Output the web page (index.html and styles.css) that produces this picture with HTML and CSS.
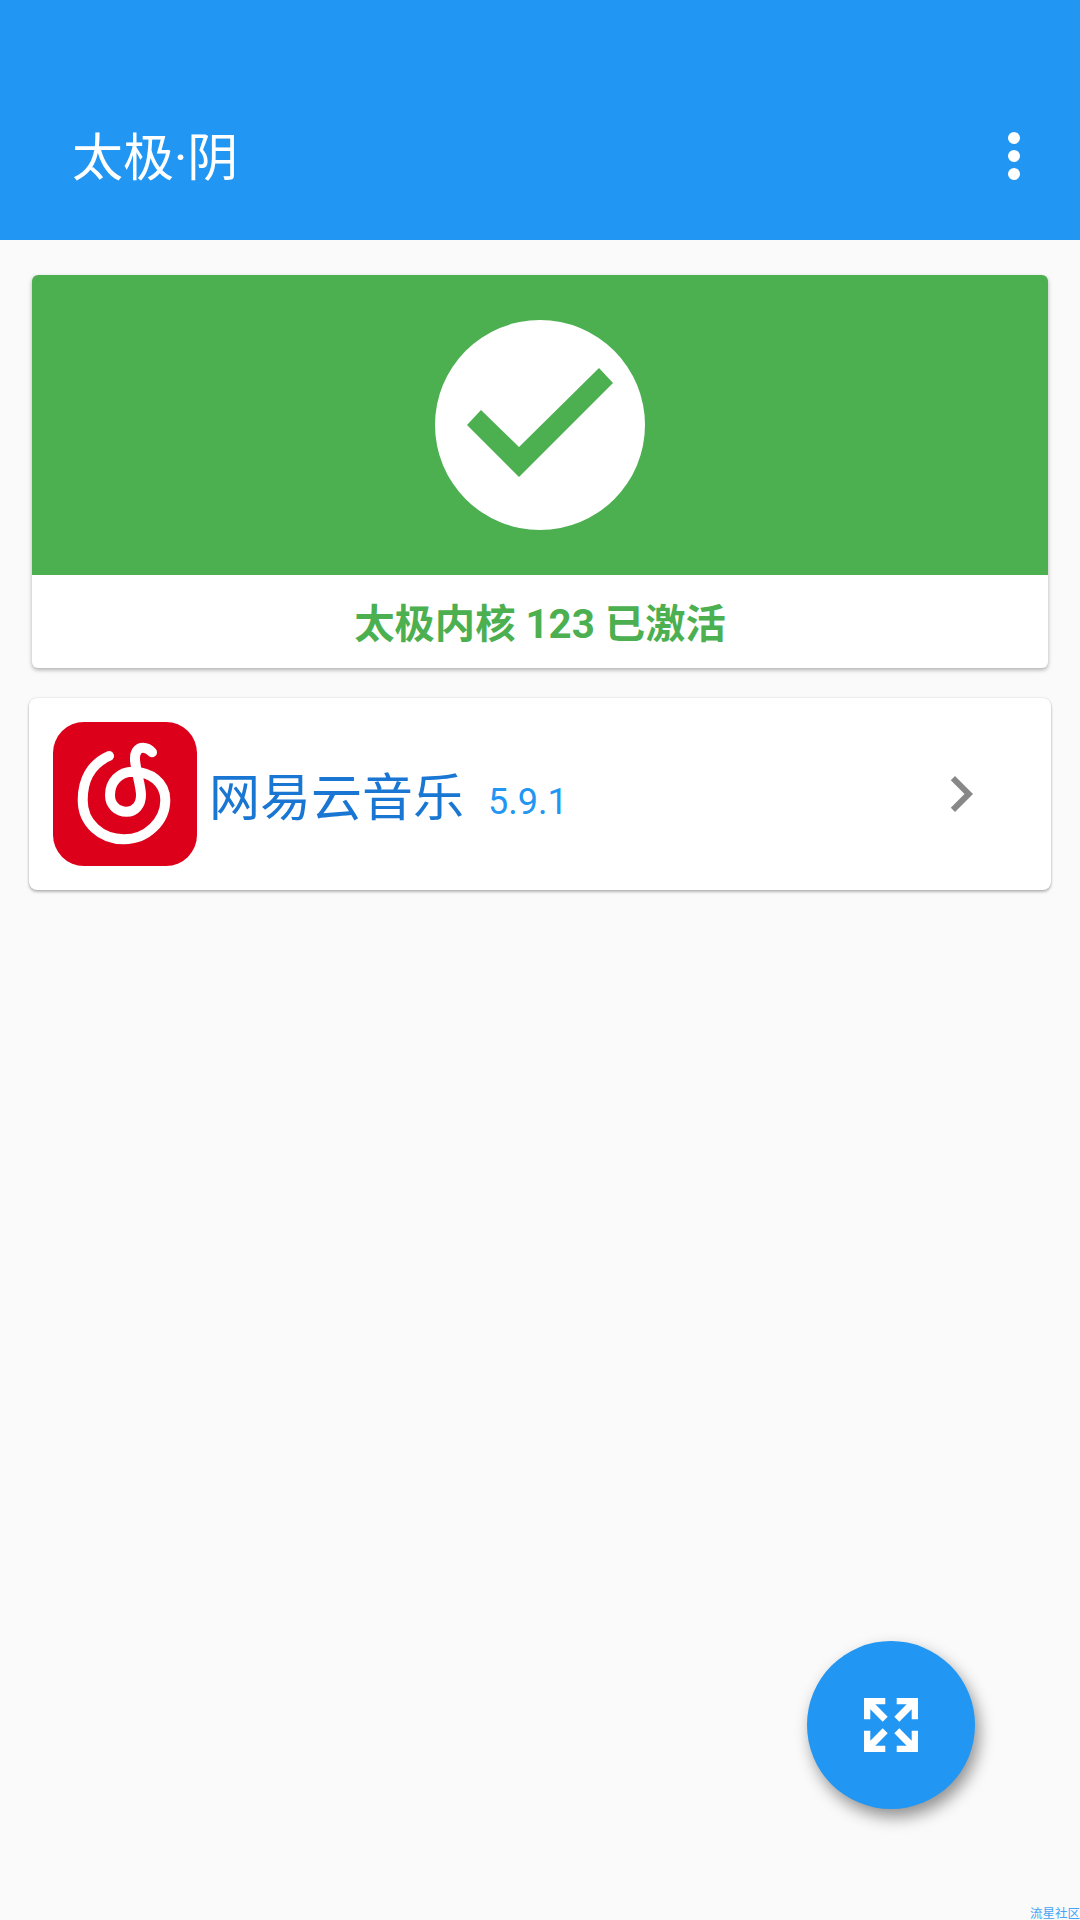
FILE: index.html
```html
<!DOCTYPE html>
<html lang="zh-CN">
<head>
<meta charset="utf-8">
<title>太极·阴</title>
<link rel="stylesheet" href="styles.css">
</head>
<body>
<div class="screen">
  <header class="appbar">
    <h1 class="appbar-title">太极·阴</h1>
    <svg class="overflow-icon" viewBox="0 0 12 48" aria-hidden="true">
      <circle cx="6" cy="6" r="6"/><circle cx="6" cy="24" r="6"/><circle cx="6" cy="42" r="6"/>
    </svg>
  </header>
  <main class="content">
    <section class="status-card">
      <div class="status-banner">
        <svg class="status-icon" viewBox="0 0 210 210" aria-hidden="true">
          <circle class="status-disc" cx="105" cy="105" r="105"/>
          <path class="status-check" d="M32 105L46 90L84 127L164 48L178 63L84 157Z"/>
        </svg>
      </div>
      <div class="status-label">太极内核 123 已激活</div>
    </section>
    <section class="app-card">
      <svg class="app-logo" viewBox="0 0 144 144" aria-hidden="true">
        <rect class="app-logo-bg" width="144" height="144" rx="31"/>
        <path class="app-logo-mark" d="M56 34C38 42 29.7 58 29.7 78C29.7 101 48 117.3 71 117.3C94 117.3 112.3 99 112.3 78C112.3 60 97 49.7 80 49.7C66 49.7 57 60 57 73C57 83 64 89.7 73.7 89.7C82 89.7 88 83 88 73C88 64 83 50 82 38C81.5 30 85 25.7 90 25.7C94 25.7 97 28 99 30.3"/>
      </svg>
      <span class="app-name">网易云音乐</span>
      <span class="app-version">5.9.1</span>
      <svg class="app-chevron" viewBox="0 0 24 24" aria-hidden="true">
        <path d="M10 6L8.59 7.41 13.17 12l-4.58 4.59L10 18l6-6z"/>
      </svg>
    </section>
  </main>
  <button class="fab" type="button" aria-label="展开">
    <svg class="fab-icon" viewBox="0 0 54 54" aria-hidden="true">
      <path d="M0 0H21.3V6.3H11.3L23.7 18.7L18.7 23.7L6.3 11.3V21.3H0Z"/>
      <path d="M54 0H32.7V6.3H42.7L30.3 18.7L35.3 23.7L47.7 11.3V21.3H54Z"/>
      <path d="M0 54H21.3V47.7H11.3L23.7 35.3L18.7 30.3L6.3 42.7V32.7H0Z"/>
      <path d="M54 54H32.7V47.7H42.7L30.3 35.3L35.3 30.3L47.7 42.7V32.7H54Z"/>
    </svg>
  </button>
  <div class="watermark">流星社区</div>
</div>
</body>
</html>
```
FILE: styles.css
```css
* { box-sizing: border-box; }
html, body { margin: 0; padding: 0; }
body {
  font-family: Roboto, "Noto Sans CJK SC", sans-serif;
  background: #fafafa;
}
.screen {
  position: relative;
  width: 1080px;
  height: 1920px;
  overflow: hidden;
  background: #fafafa;
}
.appbar {
  height: 240px;
  padding: 72px 60px 0 72px;
  background: #2196f3;
  display: flex;
  align-items: center;
  justify-content: space-between;
}
.appbar-title {
  margin: 5px 0 0;
  font-size: 51px;
  font-weight: 400;
  line-height: 72px;
  color: #fff;
}
.overflow-icon { width: 12px; height: 48px; fill: #fff; }
.content {
  padding-top: 35px;
  display: flex;
  flex-direction: column;
}
.status-card {
  margin: 0 32px;
  height: 393px;
  border-radius: 6px;
  overflow: hidden;
  background: #fff;
  box-shadow: 0 2px 4px rgba(0, 0, 0, .3);
  display: flex;
  flex-direction: column;
}
.status-banner {
  height: 300px;
  background: #4caf50;
  display: flex;
  align-items: center;
  justify-content: center;
}
.status-icon { width: 210px; height: 210px; }
.status-disc { fill: #fff; }
.status-check { fill: #4caf50; }
.status-label {
  flex: 1;
  padding-bottom: 3px;
  display: flex;
  align-items: center;
  justify-content: center;
  font-size: 40.3px;
  font-weight: 700;
  color: #4caf50;
}
.app-card {
  margin: 30px 29px 0;
  height: 192px;
  padding: 24px 54px 24px 24px;
  border-radius: 8px;
  background: #fff;
  box-shadow: 0 0 2px rgba(0, 0, 0, .16), 0 2px 3px rgba(0, 0, 0, .26);
  display: flex;
  align-items: center;
}
.app-logo { width: 144px; height: 144px; flex: none; }
.app-logo-bg { fill: #dd001b; }
.app-logo-mark {
  fill: none;
  stroke: #fff;
  stroke-width: 10;
  stroke-linecap: round;
  stroke-linejoin: round;
}
.app-name {
  margin-left: 12px;
  font-size: 51px;
  color: #1976d2;
}
.app-version {
  margin-left: 24px;
  margin-top: 16px;
  font-size: 36px;
  color: #2196f3;
}
.app-chevron {
  margin-left: auto;
  width: 72px;
  height: 72px;
  fill: #888;
}
.fab {
  position: absolute;
  left: 807px;
  top: 1641px;
  width: 168px;
  height: 168px;
  padding: 0;
  border: 0;
  border-radius: 50%;
  background: #2196f3;
  box-shadow: 4px 8px 16px rgba(0, 0, 0, .42);
  display: flex;
  align-items: center;
  justify-content: center;
}
.fab-icon { width: 54px; height: 54px; fill: #fff; }
.watermark {
  position: absolute;
  right: 0;
  bottom: -1px;
  font-size: 12.5px;
  line-height: 14px;
  color: #42a5f5;
}
```
